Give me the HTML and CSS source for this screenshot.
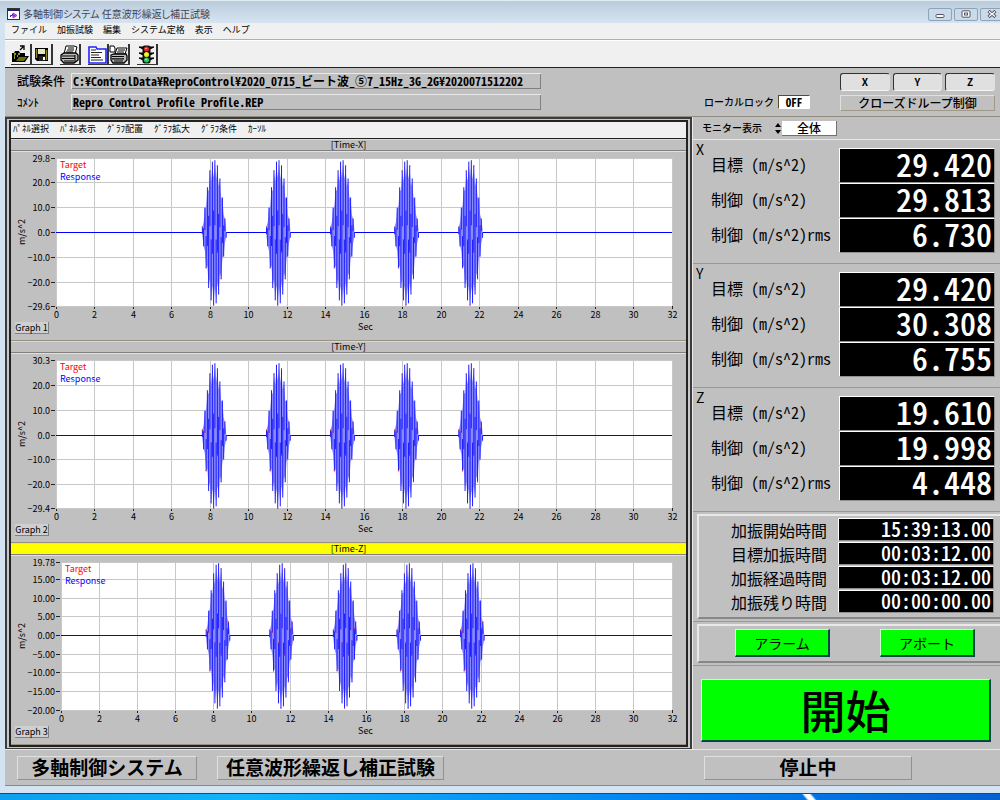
FILE: index.html
```html
<!DOCTYPE html>
<html lang="ja">
<head>
<meta charset="utf-8">
<title>多軸制御システム</title>
<link rel="stylesheet" href="styles.css">
</head>
<body>
<div class="window">
  <header class="titlebar">
    <svg class="app-icon" width="13" height="12" viewBox="0 0 13 12"><rect x="0.5" y="0.5" width="12" height="11" fill="#fff" stroke="#333"/><path d="M1 2h11" stroke="#226" stroke-width="2"/><path d="M3 7.5h5M6 5l4 2.5L6 10z" stroke="#a3a" fill="#d4d"/><path d="M3 9l3-3" stroke="#22c"/></svg>
    <h1 class="title">多軸制御システム 任意波形繰返し補正試験</h1>
    <div class="caption-buttons">
      <button class="caption" aria-label="最小化"><svg width="10" height="8" viewBox="0 0 10 8"><rect x="1" y="4.5" width="8" height="3" rx="1" fill="#fff" stroke="#556"/></svg></button>
      <button class="caption" aria-label="最大化"><svg width="10" height="8" viewBox="0 0 10 8"><rect x="1" y="0.8" width="8" height="6.4" rx="1" fill="#fff" stroke="#556"/><rect x="3.5" y="3" width="3" height="2" fill="#fff" stroke="#556"/></svg></button>
      <button class="caption" aria-label="閉じる"><svg width="10" height="8" viewBox="0 0 10 8"><path d="M1.500 1l7 6M8.500 1l-7 6" stroke="#556" stroke-width="3.200"/><path d="M2 1.400l6 5.200M8 1.400l-6 5.200" stroke="#fff" stroke-width="1.300"/></svg></button>
    </div>
  </header>
  <div class="client">
    <nav class="menubar">
      <button class="menu">ファイル</button><button class="menu">加振試験</button><button class="menu">編集</button><button class="menu">システム定格</button><button class="menu">表示</button><button class="menu">ヘルプ</button>
    </nav>
    <div class="toolbar">
      <button class="tool" aria-label="開く"><svg width="19" height="19" viewBox="0 0 19 19"><path d="M1 17V8h2l1-2h4l1 2h5v3h4l-4 6z" fill="#000"/><path d="M3 9h2M7 9h2M3 11h1M6 11h1M3 13h1" stroke="#cc3" stroke-width="1.500"/><path d="M5 16l3-4h8l-3 4z" fill="#6b6b10"/><path d="M9 5l3-3M9 1h4v4" fill="none" stroke="#000" stroke-width="1.300"/></svg></button>
      <button class="tool" aria-label="保存"><svg width="19" height="19" viewBox="0 0 19 19"><path d="M3 3h13v13H5l-2-2z" fill="#000"/><path d="M4.500 4v9M14.500 5v10" stroke="#8a8a20" stroke-width="1.500"/><path d="M6 4h7v5H6z" fill="#e8e8c0"/><path d="M7 11h6v5H7z" fill="#222"/><path d="M11 12h2v3h-2z" fill="#fff"/></svg></button>
      <button class="tool tool-gap" aria-label="印刷"><svg width="19" height="19" viewBox="0 0 19 19"><path d="M6 1h8l3 1-2 7H4z" fill="#fff" stroke="#000"/><path d="M8 3h6M7 5h7M6 7h7" stroke="#000"/><path d="M1 10l3-2h12l2 2v5l-4 3H4l-3-3z" fill="#bbb" stroke="#000" stroke-width="1.300"/><path d="M2 11h13M2 13.500h13M4 16h10" stroke="#000" stroke-width="1.200"/><path d="M15 10v7" stroke="#000"/><path d="M10 12.300h3" stroke="#cc3"/></svg></button>
      <button class="tool tool-gap" aria-label="条件"><svg width="19" height="19" viewBox="0 0 19 19"><path d="M1 2h7l1 2h9v14H1z" fill="#fff" stroke="#22f" stroke-width="1.600"/><path d="M3 5h5M3 7.500h11M3 10h8M3 12.500h10M3 15h12" stroke="#222"/></svg></button>
      <button class="tool" aria-label="条件印刷"><svg width="19" height="19" viewBox="0 0 19 19"><path d="M1 1h4l1 2v4H1z" fill="#fff" stroke="#000"/><path d="M8 3h10l-2 6H6z" fill="#fff" stroke="#000"/><path d="M9 5h7M8 7h7" stroke="#000"/><path d="M2 10l3-1h12l1 2v4l-3 3H4l-2-3z" fill="#bbb" stroke="#000" stroke-width="1.300"/><path d="M3 11.500h12M3 13.800h12M5 16h9" stroke="#000" stroke-width="1.200"/><path d="M10 12.600h3" stroke="#cc3"/></svg></button>
      <button class="tool tool-gap" aria-label="運転"><svg width="19" height="19" viewBox="0 0 19 19"><path d="M2 2h4v2zM17 2h-4v2zM2 8h4v2zM17 8h-4v2zM2 13h4v2zM17 13h-4v2z" fill="#000" stroke="#000"/><rect x="5.500" y="0.500" width="8" height="18" rx="2" fill="#111"/><circle cx="9.500" cy="4" r="2.500" fill="#e22"/><circle cx="9.500" cy="9.500" r="2.500" fill="#ee2"/><circle cx="9.500" cy="15" r="2.500" fill="#2c6"/><path d="M8.500 3.500h1M8.500 9h1M8.500 14.500h1" stroke="#fff"/></svg></button>
    </div>

    <section class="header-panel">
      <div class="conditions">
        <label class="cond-label" for="cond">試験条件</label>
        <input class="cond-field" id="cond" readonly value="C:¥ControlData¥ReproControl¥2020_0715_ビート波_⑤7_15Hz_3G_2G¥2020071512202">
        <label class="cond-label cond-small" for="comment">ｺﾒﾝﾄ</label>
        <input class="cond-field" id="comment" readonly value="Repro Control Profile Profile.REP">
      </div>
      <div class="lock">
        <span id="lock-label">ローカルロック</span>
        <button class="lock-button" aria-labelledby="lock-label">OFF</button>
      </div>
      <div class="axes">
        <div class="axis-row"><button class="axis">X</button><button class="axis">Y</button><button class="axis">Z</button></div>
        <div class="loop-mode">クローズドループ制御</div>
      </div>
    </section>

    <main class="main">
      <section class="graph-frame">
        <div class="graph-inner">
          <nav class="graph-menu">
            <button class="menu">ﾊﾟﾈﾙ選択</button><button class="menu">ﾊﾟﾈﾙ表示</button><button class="menu">ｸﾞﾗﾌ配置</button><button class="menu">ｸﾞﾗﾌ拡大</button><button class="menu">ｸﾞﾗﾌ条件</button><button class="menu">ｶｰｿﾙ</button>
          </nav>
          <figure class="graph">
            <figcaption class="graph-title">[Time-X]</figcaption>
            <svg class="plot" data-axis="x"></svg>
            <div class="graph-foot"><button class="graph-name">Graph 1</button><span class="unit">Sec</span></div>
          </figure>
          <figure class="graph">
            <figcaption class="graph-title">[Time-Y]</figcaption>
            <svg class="plot" data-axis="y"></svg>
            <div class="graph-foot"><button class="graph-name">Graph 2</button><span class="unit">Sec</span></div>
          </figure>
          <figure class="graph">
            <figcaption class="graph-title active">[Time-Z]</figcaption>
            <svg class="plot" data-axis="z"></svg>
            <div class="graph-foot"><button class="graph-name">Graph 3</button><span class="unit">Sec</span></div>
          </figure>
        </div>
      </section>

      <aside class="side">
        <div class="monitor">
          <label for="monitor">モニター表示</label>
          <div class="stepper">
            <button class="step" aria-label="前へ"><svg width="6" height="4" viewBox="0 0 6 4"><path d="M3 0l3 4H0z"/></svg></button>
            <button class="step" aria-label="次へ"><svg width="6" height="4" viewBox="0 0 6 4"><path d="M3 4l3-4H0z"/></svg></button>
          </div>
          <input class="monitor-field" id="monitor" value="全体">
        </div>
        <section class="readout">
          <h2 class="axis-name">X</h2>
          <dl class="values">
            <dt>目標 (m/s^2)</dt><dd>29.420</dd>
            <dt>制御 (m/s^2)</dt><dd>29.813</dd>
            <dt>制御 (m/s^2)rms</dt><dd>6.730</dd>
          </dl>
        </section>
        <section class="readout">
          <h2 class="axis-name">Y</h2>
          <dl class="values">
            <dt>目標 (m/s^2)</dt><dd>29.420</dd>
            <dt>制御 (m/s^2)</dt><dd>30.308</dd>
            <dt>制御 (m/s^2)rms</dt><dd>6.755</dd>
          </dl>
        </section>
        <section class="readout">
          <h2 class="axis-name">Z</h2>
          <dl class="values">
            <dt>目標 (m/s^2)</dt><dd>19.610</dd>
            <dt>制御 (m/s^2)</dt><dd>19.998</dd>
            <dt>制御 (m/s^2)rms</dt><dd>4.448</dd>
          </dl>
        </section>
        <section class="group">
          <dl class="raised times">
            <dt>加振開始時間</dt><dd>15:39:13.00</dd>
            <dt>目標加振時間</dt><dd>00:03:12.00</dd>
            <dt>加振経過時間</dt><dd>00:03:12.00</dd>
            <dt>加振残り時間</dt><dd>00:00:00.00</dd>
          </dl>
        </section>
        <section class="group">
          <div class="raised alarms">
            <button class="green alarm">アラーム</button>
            <button class="green alarm">アボート</button>
          </div>
        </section>
        <section class="start-panel"><button class="green start">開始</button></section>
      </aside>
    </main>

    <footer class="status">
      <div class="status-box status-system">多軸制御システム</div>
      <div class="status-box status-test">任意波形繰返し補正試験</div>
      <div class="status-box status-state">停止中</div>
    </footer>
  </div>
</div>
<div class="taskbar"></div>
<script src="plots.js"></script>
</body>
</html>
```
FILE: styles.css
```css
* { box-sizing: border-box; }

body {
  margin: 0;
  min-height: 100vh;
  display: flex;
  flex-direction: column;
  background: #d4e3f1;
  color: #000;
  font-family: "Noto Sans CJK JP", "Liberation Sans", sans-serif;
  font-size: 12px;
  line-height: 1;
}

button, input {
  margin: 0;
  padding: 0;
  border: 0;
  border-radius: 0;
  background: none;
  color: inherit;
  font: inherit;
}

h1, h2, dl, dd, figure { margin: 0; font-weight: normal; }

.window { flex: 1; display: flex; flex-direction: column; }

.titlebar {
  height: 23px;
  display: flex;
  align-items: center;
  gap: 3px;
  padding: 4px 0 0 7px;
  border-top: 1px solid #e2ecf5;
  background: linear-gradient(#bacbdb, #d6e4f2);
}
.title { font-size: 10px; color: #445; font-feature-settings: "palt"; }
.caption-buttons { display: flex; gap: 2px; margin: 0 -4px 0 auto; }
.caption {
  width: 24px;
  height: 13px;
  display: grid;
  place-items: center;
  border: 1px solid #8fa3b8;
  border-radius: 2px;
  background: #cbdae8;
}

.client {
  flex: 1;
  display: flex;
  flex-direction: column;
  margin-left: 5px;
  margin-bottom: 7px;
  border-bottom: 1px solid #888;
  background: #c0c0c0;
}

.menubar, .graph-menu { display: flex; align-items: center; background: #f0f0f0; font-size: 9px; }
.menubar { height: 17px; gap: 10px; padding: 0 6px 3px; border-bottom: 1px solid #b0b0b0; }
.menu { white-space: nowrap; }

.toolbar {
  height: 28px;
  display: flex;
  align-items: flex-start;
  padding: 3px 6px;
  border-top: 1px solid #fff;
  border-bottom: 1px solid #222;
  background: #f0f0f0;
}
.tool {
  width: 21px;
  height: 21px;
  display: grid;
  place-items: center;
  border-right: 2px solid #333;
  border-bottom: 1px solid #333;
}
.tool-gap { margin-left: 7px; }

.header-panel {
  display: flex;
  align-items: flex-start;
  height: 49px;
  padding: 5px 5px 0 12px;
  border-bottom: 1px solid #928b80;
}
.conditions {
  display: grid;
  grid-template-columns: 54px 470px;
  grid-auto-rows: 16px;
  row-gap: 5px;
  align-items: center;
  font-weight: bold;
}
.cond-label { font-size: 12px; font-weight: 500; }
.cond-small { font-size: 11px; }
.cond-field {
  width: 100%;
  height: 16px;
  padding: 0 2px;
  box-shadow: inset 1px 1px #e8e8e8, inset -1px -1px #808080;
  font-size: 12px;
  line-height: 16px;
  font-weight: bold;
  font-feature-settings: "hwid";
}
.lock {
  display: flex;
  align-items: center;
  gap: 4px;
  margin: 22px 30px 0 auto;
  font-size: 10px;
  font-weight: 500;
}
.lock-button {
  width: 32px;
  height: 14px;
  border: 1px solid;
  border-color: #554c28 #fff #fff #554c28;
  background: #fff;
  font-size: 11px;
  font-weight: bold;
  font-feature-settings: "hwid";
}
.axes { width: 155px; }
.axis-row { display: grid; grid-template-columns: repeat(3, 1fr); gap: 3px; }
.axis {
  height: 18px;
  border: 1px solid;
  border-color: #333 #e0e0e0 #f4f4f4 #333;
  border-radius: 3px;
  background: #e0e0e0;
  font-size: 10px;
  font-weight: bold;
}
.loop-mode {
  height: 16px;
  margin-top: 4px;
  border: 1px solid;
  border-color: #e0e0e0 #a09888 #a09888 #e0e0e0;
  font-size: 12px;
  line-height: 14px;
  font-weight: 500;
  text-align: center;
}

.main { flex: 1; display: flex; }
.graph-frame {
  flex: 1;
  min-width: 0;
  padding: 1px 2px;
  border: 2px solid #3c3c3c;
  border-bottom-width: 1px;
  background: #c8c8c8;
}
.graph-inner { border: 2px solid #222; background: #c0c0c0; }
.graph-menu { height: 17px; gap: 11px; padding: 0 2px 3px; border-bottom: 1px solid #222; }
.graph { display: flex; flex-direction: column; }
.graph-title {
  height: 12px;
  border-top: 1px solid #d8d8d8;
  border-bottom: 1px solid #808080;
  font-size: 9px;
  line-height: 10px;
  text-align: center;
}
.active { background: #ff0; }
.plot {
  display: block;
  width: 100%;
  height: 169px;
  font-size: 9px;
  border-top: 1px solid #e0e0e0;
}
.graph-foot {
  display: grid;
  grid-template-columns: 34px 1fr;
  align-items: start;
  height: 21px;
  padding: 2px 4px 0;
  border-bottom: 1px solid #989080;
  font-size: 9px;
}
.graph-name {
  height: 12px;
  border-right: 1px solid #808080;
  border-bottom: 1px solid #808080;
  background: #d0d0d0;
  line-height: 10px;
  white-space: nowrap;
}
.unit { text-align: center; }

.side { width: 308px; border-left: 1px solid #e8e8e8; }
.monitor {
  display: flex;
  align-items: center;
  height: 23px;
  padding-left: 9px;
  border-bottom: 1px solid #e8e8e8;
  font-size: 10px;
  font-weight: 500;
}
.stepper { display: flex; flex-direction: column; gap: 3px; margin-left: 13px; padding-right: 1px; }
.step { display: grid; place-items: center; width: 6px; height: 4px; }
.monitor-field {
  width: 55px;
  height: 15px;
  border-right: 1px solid #707070;
  border-bottom: 1px solid #707070;
  background: #fff;
  font-size: 12px;
  font-weight: 500;
  text-align: center;
}

.readout {
  display: flex;
  height: 124px;
  padding: 2px 5px 0 3px;
  border-bottom: 1px solid #a09888;
}
.axis-name { width: 15px; font-size: 14px; }
.values {
  flex: 1;
  display: grid;
  grid-template-columns: 1fr 156px;
  grid-auto-rows: 35px;
  padding-top: 6px;
  font-feature-settings: "hwid";
}
.values dt { padding-top: 8px; font-size: 16px; white-space: nowrap; }
.values dd, .times dd {
  border: 1px solid;
  border-color: #fff #909090 #909090 #fff;
  background: #000;
  color: #fff;
  font-weight: 500;
  text-align: right;
}
.values dd { padding-right: 2px; font-size: 32px; line-height: 29px; }

.group { padding: 2px 0 2px 4px; border-bottom: 1px solid #a09888; }
.raised {
  border: 2px solid;
  border-color: #e8e8e8 #888 #888 #e8e8e8;
  border-right: 0;
}
.times {
  display: grid;
  grid-template-columns: 1fr 156px;
  grid-auto-rows: 23px;
  row-gap: 1px;
  align-items: center;
  padding: 2px 6px 4px 32px;
  font-size: 16px;
  font-feature-settings: "hwid";
}
.times dd { height: 23px; padding-right: 2px; font-size: 20px; line-height: 20px; }
.alarms { display: flex; justify-content: space-between; padding: 3px 25px 4px 36px; }
.green {
  border: 1px solid;
  border-color: #cfc #044 #044 #cfc;
  border-right-width: 2px;
  border-bottom-width: 2px;
  background: #0f0;
}
.alarm { width: 95px; height: 28px; font-size: 14px; }
.start-panel { padding: 13px 9px 6px 8px; }
.start { width: 100%; height: 63px; font-size: 45px; line-height: 56px; font-weight: 500; }

.status {
  display: flex;
  align-items: center;
  height: 36px;
  padding: 0 88px 0 12px;
  border-top: 1px solid #e8e8e8;
  font-size: 19px;
  font-weight: bold;
}
.status-box {
  height: 24px;
  border: 1px solid;
  border-color: #e0e0e0 #909090 #909090 #e0e0e0;
  line-height: 20px;
  text-align: center;
  white-space: nowrap;
}
.status-system { width: 180px; margin-right: 20px; }
.status-test { width: 227px; }
.status-state { width: 208px; margin-left: auto; }

.taskbar {
  height: 9px;
  border-top: 1px solid #345;
  background: linear-gradient(50deg, transparent 32%, #fff 42%, #fff 58%, transparent 68%) 798px 0 / 24px 8px no-repeat, linear-gradient(90deg, #0ba0f0, #12b4fa 25%, #0a9cf6 45%, #0080f0 70%, #0560d0);
}

.grid-line { stroke: #c8c8c8; stroke-width: 1; }
.tick { stroke: #222; stroke-width: 1; }
.axis-title { font-size: 9px; }
.target { fill: #f00; }
.response { fill: #00f; }
.burst { fill: #8a8aff; }
.peak { stroke: #1c1cff; stroke-width: 1; }
.tip { stroke: #f33; stroke-width: 1; }
.rest { stroke: #00f; stroke-width: 1; }
```
FILE: plots.js
```js
const NS = "http://www.w3.org/2000/svg";
const TOP = 6;
const HEIGHT = 148;

const axes = {
  x: { left: 45, max: 29.8, min: -29.6, step: 10, digits: 1 },
  y: { left: 45, max: 30.3, min: -29.4, step: 10, digits: 1 },
  z: { left: 50, max: 19.78, min: -20, step: 5, digits: 2 }
};

const bursts = [8.17, 11.5, 14.83, 18.16, 21.49];
const envelope = [0.08, 0.19, 0.34, 0.49, 0.62, 0.76, 0.85, 0.93, 0.97, 1, 0.99, 0.97, 0.92, 0.85, 0.74, 0.64, 0.48, 0.33, 0.19, 0.07];

function add(parent, name, attributes, text) {
  const node = document.createElementNS(NS, name);
  for (const key in attributes) node.setAttribute(key, attributes[key]);
  if (text !== undefined) node.textContent = text;
  parent.appendChild(node);
  return node;
}

function label(value, digits) {
  return (value < 0 ? "−" : "") + Math.abs(value).toFixed(digits);
}

function draw(svg) {
  const axis = axes[svg.dataset.axis];
  svg.replaceChildren();
  const width = svg.clientWidth - axis.left - 14;
  const px = t => axis.left + t / 32 * width;
  const py = v => TOP + (axis.max - v) / (axis.max - axis.min) * HEIGHT;
  const snap = n => Math.floor(n) + 0.5;

  add(svg, "rect", { x: axis.left, y: TOP, width: width + 1, height: HEIGHT, fill: "#fff" });

  for (let t = 0; t <= 32; t += 2) {
    const x = snap(px(t));
    add(svg, "line", { class: "grid-line", x1: x, x2: x, y1: TOP, y2: TOP + HEIGHT });
    add(svg, "line", { class: "tick", x1: x, x2: x, y1: TOP + HEIGHT, y2: TOP + HEIGHT + 3 });
    add(svg, "text", { x, y: TOP + HEIGHT + 12, "text-anchor": "middle" }, t);
  }

  const levels = [axis.max, axis.min];
  for (let v = Math.ceil((axis.min + 0.5) / axis.step) * axis.step; v < axis.max - 1; v += axis.step) {
    if (v - axis.min > 1) levels.push(v);
  }
  for (const v of levels) {
    const y = snap(py(v));
    add(svg, "line", { class: "grid-line", x1: axis.left, x2: axis.left + width, y1: y, y2: y });
    add(svg, "line", { class: "tick", x1: axis.left - 5, x2: axis.left - 1, y1: y, y2: y });
    add(svg, "text", { x: axis.left - 6, y: y + 3, "text-anchor": "end" }, label(v, axis.digits));
  }

  const mid = TOP + HEIGHT / 2;
  add(svg, "text", { class: "axis-title", "text-anchor": "middle", transform: `translate(14 ${mid}) rotate(-90)` }, "m/s^2");
  add(svg, "text", { class: "target", x: axis.left + 4, y: TOP + 10 }, "Target");
  add(svg, "text", { class: "response", x: axis.left + 4, y: TOP + 22 }, "Response");

  const zero = snap(py(0));
  add(svg, "line", { class: "rest", x1: axis.left, x2: axis.left + width, y1: zero, y2: zero });

  for (const center of bursts) {
    const count = envelope.length;
    const spacing = 1.3 * width / 32 / count;
    const start = px(center) + 1 - spacing * (count - 1) / 2;
    const at = i => start + i * spacing;
    const half = HEIGHT / 2 - 1;
    const upper = [];
    const lower = [];
    envelope.forEach((e, i) => {
      upper.push(`${at(i)},${zero - e * half * (i % 2 ? 0.75 : 0.95)}`);
      lower.unshift(`${at(i)},${zero + e * half * (i % 2 ? 0.95 : 0.75)}`);
    });
    add(svg, "polygon", { class: "burst", points: upper.concat(lower).join(" ") });
    envelope.forEach((e, i) => {
      const direction = i % 2 ? 1 : -1;
      const end = zero + direction * e * half;
      const back = zero - direction * e * half * (i % 4 < 2 ? 0.3 : -0.1);
      add(svg, "line", { class: "peak", x1: at(i), x2: at(i), y1: back, y2: end });
      if (i % 3 === 0) {
        add(svg, "line", { class: "tip", x1: at(i), x2: at(i), y1: end - direction, y2: end });
      }
      if (i % 5 === 2) {
        add(svg, "line", { class: "tip", x1: at(i), x2: at(i), y1: back, y2: back + direction });
      }
    });
  }
}

function drawAll() {
  document.querySelectorAll(".plot").forEach(draw);
}

drawAll();
window.addEventListener("resize", drawAll);
```
